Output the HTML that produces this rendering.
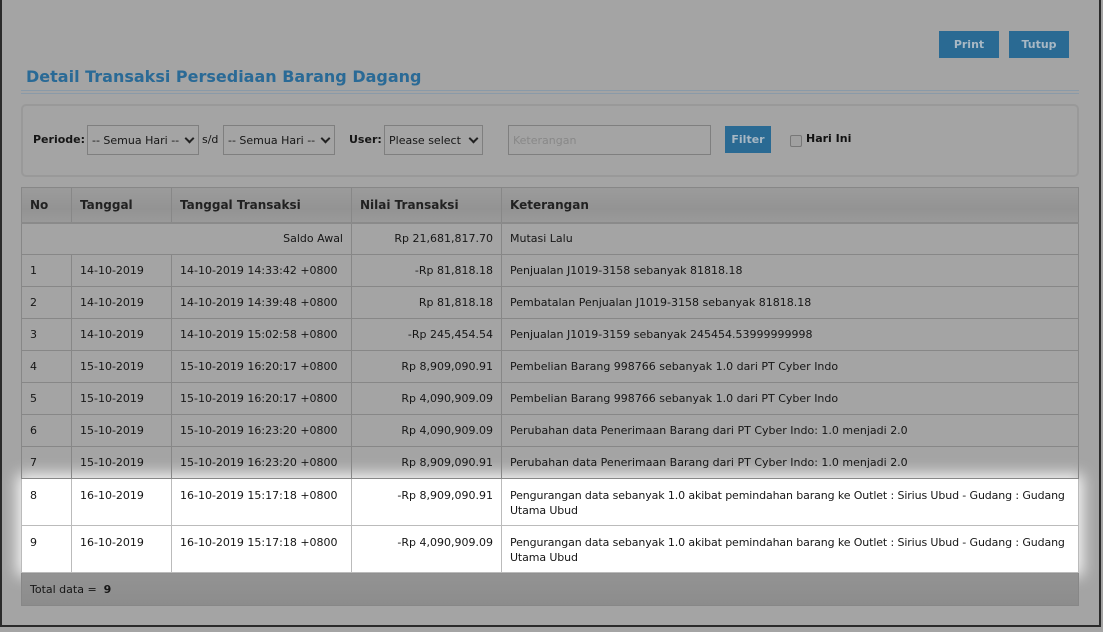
<!DOCTYPE html>
<html><head><meta charset="utf-8"><style>
*{box-sizing:border-box;margin:0;padding:0}
body{width:1103px;height:632px;background:#a4a4a4;font-family:"DejaVu Sans",sans-serif;font-size:11px;color:#161616;position:relative;overflow:hidden}
.frame{position:absolute;left:0;top:0;width:1101px;height:627px;border-left:2px solid #2a2a2a;border-right:2px solid #2a2a2a;border-bottom:2px solid #2a2a2a}
.btn{position:absolute;background:#2a6a93;color:#a8b8c4;font-weight:bold;font-size:11px;text-align:center}
.title{position:absolute;left:26px;top:67px;font-size:16px;font-weight:bold;color:#2a6a96;white-space:nowrap}
.l1{position:absolute;left:21px;width:1058px;height:1px;background:#8a9aa8}
.fbox{position:absolute;left:21px;top:104px;width:1058px;height:73px;border:2px solid #999;border-radius:5px}
.lab{position:absolute;top:133px;font-weight:bold;font-size:11px}
.sel{position:absolute;top:125px;height:30px;border:1px solid #7f7f7f;padding:8px 0 0 4px;white-space:nowrap;font-size:11px;overflow:hidden}
.sel.a:after{content:"";position:absolute;right:5px;top:9px;width:5px;height:5px;border-right:2px solid #222;border-bottom:2px solid #222;transform:rotate(45deg)}
table{position:absolute;left:21px;top:187px;border-collapse:collapse;width:1058px;table-layout:fixed}
td,th{border:1px solid #878787;padding:0 8px;white-space:nowrap;text-align:left;vertical-align:middle}
th{height:35px;background:linear-gradient(#9b9b9b,#939393 60%,#9a9a9a);font-size:12px;color:#222;border-bottom:2px solid #8a8a8a}
td{height:32px}
.r{text-align:right}
tr.w td{background:#fff;height:47px;vertical-align:top;padding-top:9px;border-color:#bbb;line-height:15px}
tr.w td:last-child{letter-spacing:-0.12px}
.foot td{background:linear-gradient(#939393,#8c8c8c);height:33px}
.sh{position:absolute;left:21px;top:478px;width:1058px;height:94px;box-shadow:0 0 14px 4px rgba(255,255,255,.9)}
</style></head><body>
<div class="frame"></div>
<div class="btn" style="left:939px;top:31px;width:60px;height:27px;line-height:27px">Print</div>
<div class="btn" style="left:1009px;top:31px;width:60px;height:27px;line-height:27px">Tutup</div>
<div class="title">Detail Transaksi Persediaan Barang Dagang</div>
<div class="l1" style="top:90px"></div><div class="l1" style="top:93px"></div>
<div class="fbox"></div>
<div class="lab" style="left:33px">Periode:</div>
<div class="sel a" style="left:87px;width:112px">-- Semua Hari --</div>
<div style="position:absolute;left:202px;top:133px;font-size:11px">s/d</div>
<div class="sel a" style="left:223px;width:112px">-- Semua Hari --</div>
<div class="lab" style="left:349px">User:</div>
<div class="sel a" style="left:384px;width:99px">Please select</div>
<div class="sel" style="left:508px;width:203px;color:#888">Keterangan</div>
<div class="btn" style="left:725px;top:126px;width:46px;height:27px;line-height:27px">Filter</div>
<div style="position:absolute;left:790px;top:135px;width:12px;height:12px;border:1px solid #777;border-radius:2px;background:#a0a0a0"></div>
<div class="lab" style="left:806px;top:132px;color:#111">Hari Ini</div>
<div class="sh"></div>
<table>
<tr><th style="width:50px">No</th><th style="width:100px">Tanggal</th><th style="width:180px">Tanggal Transaksi</th><th style="width:150px">Nilai Transaksi</th><th>Keterangan</th></tr>
<tr><td colspan="3" class="r">Saldo Awal</td><td class="r">Rp 21,681,817.70</td><td>Mutasi Lalu</td></tr>
<tr><td>1</td><td>14-10-2019</td><td>14-10-2019 14:33:42 +0800</td><td class="r">-Rp 81,818.18</td><td>Penjualan J1019-3158 sebanyak 81818.18</td></tr>
<tr><td>2</td><td>14-10-2019</td><td>14-10-2019 14:39:48 +0800</td><td class="r">Rp 81,818.18</td><td>Pembatalan Penjualan J1019-3158 sebanyak 81818.18</td></tr>
<tr><td>3</td><td>14-10-2019</td><td>14-10-2019 15:02:58 +0800</td><td class="r">-Rp 245,454.54</td><td>Penjualan J1019-3159 sebanyak 245454.53999999998</td></tr>
<tr><td>4</td><td>15-10-2019</td><td>15-10-2019 16:20:17 +0800</td><td class="r">Rp 8,909,090.91</td><td>Pembelian Barang 998766 sebanyak 1.0 dari PT Cyber Indo</td></tr>
<tr><td>5</td><td>15-10-2019</td><td>15-10-2019 16:20:17 +0800</td><td class="r">Rp 4,090,909.09</td><td>Pembelian Barang 998766 sebanyak 1.0 dari PT Cyber Indo</td></tr>
<tr><td>6</td><td>15-10-2019</td><td>15-10-2019 16:23:20 +0800</td><td class="r">Rp 4,090,909.09</td><td>Perubahan data Penerimaan Barang dari PT Cyber Indo: 1.0 menjadi 2.0</td></tr>
<tr><td>7</td><td>15-10-2019</td><td>15-10-2019 16:23:20 +0800</td><td class="r">Rp 8,909,090.91</td><td>Perubahan data Penerimaan Barang dari PT Cyber Indo: 1.0 menjadi 2.0</td></tr>
<tr class="w"><td>8</td><td>16-10-2019</td><td>16-10-2019 15:17:18 +0800</td><td class="r">-Rp 8,909,090.91</td><td>Pengurangan data sebanyak 1.0 akibat pemindahan barang ke Outlet : Sirius Ubud - Gudang : Gudang<br>Utama Ubud</td></tr>
<tr class="w"><td>9</td><td>16-10-2019</td><td>16-10-2019 15:17:18 +0800</td><td class="r">-Rp 4,090,909.09</td><td>Pengurangan data sebanyak 1.0 akibat pemindahan barang ke Outlet : Sirius Ubud - Gudang : Gudang<br>Utama Ubud</td></tr>
<tr class="foot"><td colspan="5">Total data = &nbsp;<b>9</b></td></tr>
</table>
</body></html>
